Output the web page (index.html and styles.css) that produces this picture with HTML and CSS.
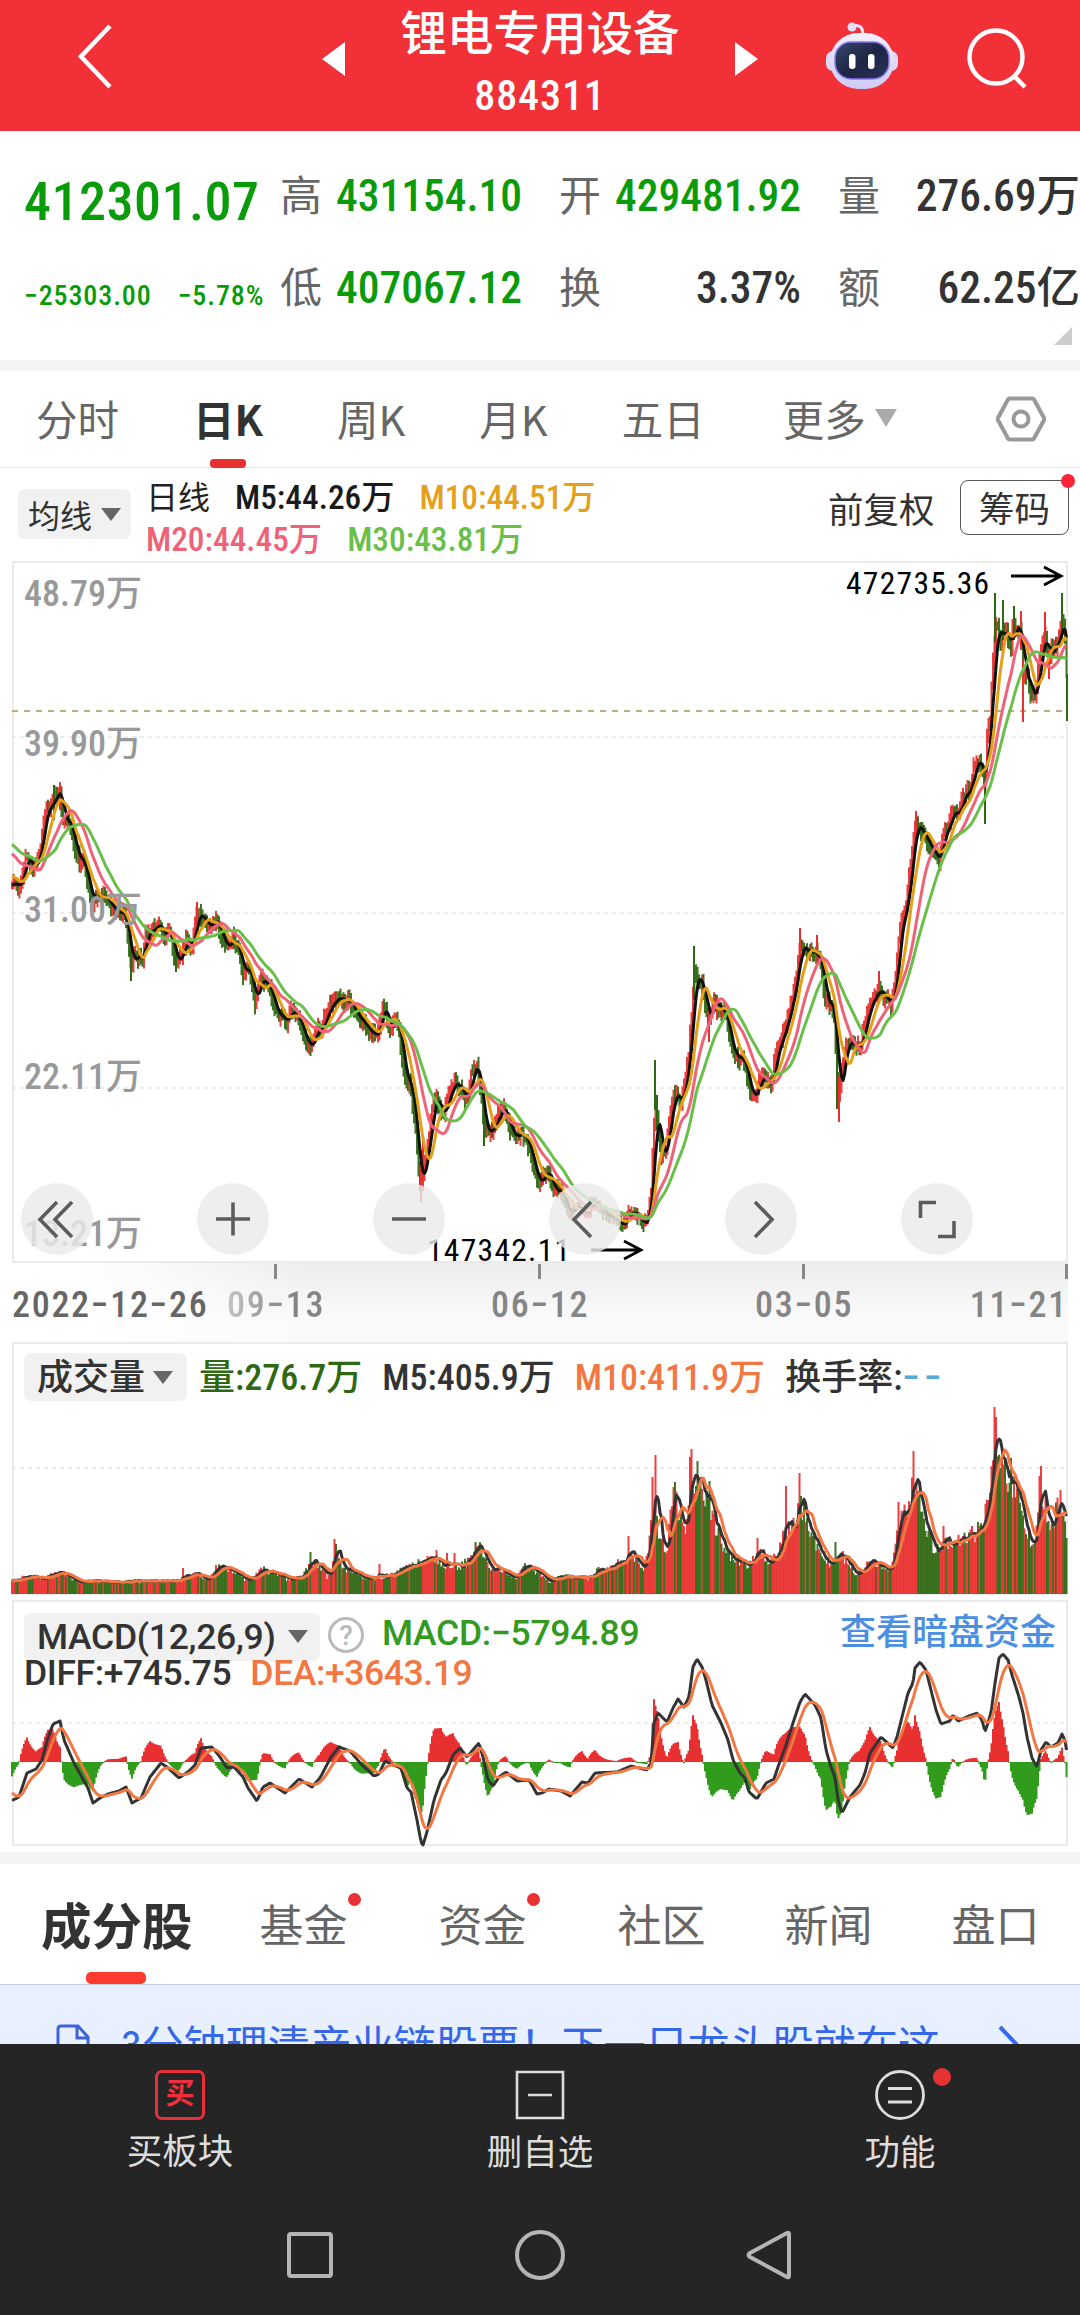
FILE: index.html
```html
<!DOCTYPE html>
<html lang="zh-CN">
<head>
  <meta charset="UTF-8">
  <meta name="viewport" content="width=device-width, initial-scale=1.0">
  <title>锂电专用设备 884311</title>
  <link rel="stylesheet" href="styles.css">
</head>
<body>
  <header class="header">
    <svg class="back" width="40" height="70" viewBox="0 0 40 70"><path d="M35 5 L6 35.500 L35 66" fill="none" stroke="#fff" stroke-width="4.500"/></svg>
    <svg class="prev" width="24" height="36" viewBox="0 0 24 36"><path d="M24 1v34L1 18z" fill="#fff"/></svg>
    <div class="title">
      <h1>锂电专用设备</h1>
      <span>884311</span>
    </div>
    <svg class="next" width="24" height="36" viewBox="0 0 24 36"><path d="M0 1v34l23-17z" fill="#fff"/></svg>
    <svg class="robot" width="74" height="70" viewBox="0 0 74 70">
      <defs>
        <linearGradient id="shell" x1="0" y1="0" x2="0" y2="1"><stop offset="0" stop-color="#f3f0ff"/><stop offset="1" stop-color="#cfcaf5"/></linearGradient>
        <linearGradient id="face" x1="0" y1="0" x2="1" y2="1"><stop offset="0" stop-color="#3a486c"/><stop offset=".5" stop-color="#1e2646"/><stop offset="1" stop-color="#28335a"/></linearGradient>
      </defs>
      <path d="M27 6q11-3 11 9" fill="none" stroke="#e9e4fb" stroke-width="3"/>
      <circle cx="27" cy="7" r="4.500" fill="#e4def8"/>
      <rect x="1" y="31" width="72" height="20" rx="7" fill="#ddd8f6"/>
      <rect x="5" y="13" width="64" height="56" rx="28" fill="url(#shell)"/>
      <rect x="10" y="22" width="54" height="37" rx="16" fill="url(#face)" stroke="#8c78e8" stroke-width="1.500"/>
      <rect x="24" y="34" width="6.500" height="15" rx="3" fill="#fff"/>
      <rect x="43" y="34" width="6.500" height="15" rx="3" fill="#fff"/>
    </svg>
    <svg class="search" width="62" height="62" viewBox="0 0 62 62"><g fill="none" stroke="#fff" stroke-width="4.500"><circle cx="30" cy="30" r="26.500"/><path d="M48 49l11 11"/></g></svg>
  </header>

  <section class="quote">
    <div class="quote-main">
      <strong>412301.07</strong>
      <p><span>−25303.00</span><span>−5.78%</span></p>
    </div>
    <dl class="quote-grid">
      <div><dt>高</dt><dd class="down">431154.10</dd></div>
      <div><dt>开</dt><dd class="down">429481.92</dd></div>
      <div><dt>量</dt><dd>276.69万</dd></div>
      <div><dt>低</dt><dd class="down">407067.12</dd></div>
      <div><dt>换</dt><dd>3.37%</dd></div>
      <div><dt>额</dt><dd>62.25亿</dd></div>
    </dl>
    <i class="corner"></i>
  </section>

  <nav class="period">
    <a>分时</a>
    <a class="active">日K</a>
    <a>周K</a>
    <a>月K</a>
    <a>五日</a>
    <a class="more">更多<i class="caret"></i></a>
    <svg class="setting" width="50" height="48" viewBox="0 0 50 48"><g fill="none" stroke="#999" stroke-width="4"><path d="M14 3.500h22a2 2 0 0 1 2 1L47.500 22a3 3 0 0 1 0 4L38 43.500a2 2 0 0 1-2 1H14a2 2 0 0 1-2-1L2.500 26a3 3 0 0 1 0-4L12 4.500a2 2 0 0 1 2-1z"/><circle cx="25" cy="24" r="7.500"/></g></svg>
  </nav>

  <section class="legend">
    <span class="chip chip-ma">均线<i class="caret"></i></span>
    <div class="legend-text">
      <p><span class="plain">日线</span><span class="ma5">M5:44.26万</span><span class="ma10">M10:44.51万</span></p>
      <p><span class="ma20">M20:44.45万</span><span class="ma30">M30:43.81万</span></p>
    </div>
    <span class="adjust">前复权</span>
    <span class="chips-btn">筹码<i class="dot"></i></span>
  </section>

  <section class="kline">
    <svg class="plot" id="kline" width="1080" height="702" viewBox="0 561 1080 702"></svg>
    <span class="scale s1">48.79万</span>
    <span class="scale s2">39.90万</span>
    <span class="scale s3">31.00万</span>
    <span class="scale s4">22.11万</span>
    <span class="scale s5">13.21万</span>
    <span class="mark high">472735.36</span>
    <span class="mark low">147342.11</span>
    <svg class="arrow arrow-high" width="54" height="22" viewBox="0 0 54 22"><path d="M1 11h50M34 2l17 9-17 9"/></svg>
    <svg class="arrow arrow-low" width="54" height="22" viewBox="0 0 54 22"><path d="M1 11h50M34 2l17 9-17 9"/></svg>
    <div class="tools">
      <svg viewBox="0 0 72 72"><path d="M36 19L19 36.500 36 54M51 19L34 36.500 51 54"/></svg>
      <svg viewBox="0 0 72 72"><path d="M36 19.500v33M19 36h34"/></svg>
      <svg viewBox="0 0 72 72"><path d="M19 36h34"/></svg>
      <svg viewBox="0 0 72 72"><path d="M42 19L25 36.500 42 54"/></svg>
      <svg viewBox="0 0 72 72"><path d="M30 19l17 17.500L30 54"/></svg>
      <svg viewBox="0 0 72 72"><path d="M19.500 35V19.500H35M53 38v15.500H37"/></svg>
    </div>
  </section>

  <section class="dates">
    <i class="tick t1"></i><i class="tick t2"></i><i class="tick t3"></i><i class="tick t4"></i>
    <span class="from">2022−12−26</span>
    <span class="date d1">09−13</span>
    <span class="date d2">06−12</span>
    <span class="date d3">03−05</span>
    <span class="date d4">11−21</span>
  </section>

  <section class="volume">
    <svg class="plot" id="volume" width="1080" height="254" viewBox="0 1342 1080 254"></svg>
    <div class="row">
      <span class="chip">成交量<i class="caret"></i></span>
      <span class="vol">量:276.7万</span>
      <span>M5:405.9万</span>
      <span class="orange">M10:411.9万</span>
      <span>换手率:<b>−−</b></span>
    </div>
  </section>

  <section class="macd">
    <svg class="plot" id="macd" width="1080" height="247" viewBox="0 1600 1080 247"></svg>
    <div class="row">
      <span class="chip">MACD(12,26,9)<i class="caret"></i></span>
      <span class="help">?</span>
      <span class="green">MACD:−5794.89</span>
      <span class="link">查看暗盘资金</span>
    </div>
    <div class="row row2"><span>DIFF:+745.75</span><span class="orange">DEA:+3643.19</span></div>
  </section>

  <nav class="tabs">
    <a class="active">成分股</a>
    <a class="new">基金<i class="dot"></i></a>
    <a class="new">资金<i class="dot"></i></a>
    <a>社区</a>
    <a>新闻</a>
    <a>盘口</a>
  </nav>

  <section class="notice">
    <svg width="34" height="44" viewBox="0 0 34 44"><path d="M2 42V5q0-3 3-3h17l10 11v29zM21 2v12h11M9 22h15" fill="none" stroke="#3c63d8" stroke-width="3"/></svg>
    <p>3分钟理清产业链股票！下一只龙头股就在这</p>
    <svg class="go" width="24" height="44" viewBox="0 0 24 44"><path d="M2 3l18 19L2 41" fill="none" stroke="#3568f0" stroke-width="4"/></svg>
  </section>

  <footer class="bottom">
    <div class="actions">
      <a><span class="buy">买</span>买板块</a>
      <a><svg width="50" height="50" viewBox="0 0 50 50"><path d="M2 2h46v46H2zM13 25h24" fill="none" stroke="#ddd" stroke-width="2.600"/></svg>删自选</a>
      <a><svg width="50" height="50" viewBox="0 0 50 50"><g fill="none" stroke="#ddd" stroke-width="2.800"><circle cx="25" cy="25" r="23.500"/><path d="M13 18.500h24M13 32h24"/></g></svg>功能<i class="dot"></i></a>
    </div>
    <div class="system">
      <svg viewBox="0 0 52 52"><rect x="5" y="5" width="42" height="42" rx="2"/></svg>
      <svg viewBox="0 0 52 52"><circle cx="26" cy="26" r="23"/></svg>
      <svg viewBox="0 0 52 52"><path d="M45 5v42q0 2-2 1L6 28q-3-2 0-4L43 4q2-1 2 1z"/></svg>
    </div>
  </footer>

  <script src="chart.js"></script>
</body>
</html>
```

FILE: styles.css
```css
* { box-sizing: border-box; margin: 0; padding: 0; }
body { width: 1080px; height: 2315px; overflow: hidden; background: #fff; color: #333; font-family: Roboto, "Noto Sans CJK SC", sans-serif; font-stretch: 75%; font-size: 36px; font-weight: 500; }
svg { display: block; flex: none; }
i, b { font-style: normal; font-weight: inherit; }
.caret { display: inline-block; flex: none; border: 10px solid transparent; border-top: 13px solid #666; border-bottom: 0; }
.dot { position: absolute; width: 14px; height: 14px; border-radius: 50%; background: #e63232; }

/* header */
.header { height: 131px; background: #f23037; color: #fff; display: flex; align-items: flex-start; }
.back { margin: 21px 0 0 75px; }
.prev { margin: 41px 0 0 206px; }
.title { width: 390px; text-align: center; }
.title h1 { font-size: 46.5px; font-weight: 500; line-height: 68px; height: 68px; }
.title span { display: block; font-size: 42px; line-height: 56px; letter-spacing: .9px; }
.next { margin: 41px 0 0; }
.robot { margin: 20px 0 0 66px; }
.search { margin: 27px 0 0 67px; }

/* quote */
.quote { position: relative; height: 229px; display: flex; padding-top: 19px; }
.quote-main { width: 281px; padding-left: 24px; color: #099b09; }
.quote-main strong { display: block; font-size: 54px; font-weight: 500; line-height: 104px; letter-spacing: .5px; }
.quote-main p { display: flex; gap: 26px; font-size: 28px; line-height: 84px; letter-spacing: .9px; white-space: nowrap; }
.quote-grid { display: grid; grid-template-columns: repeat(3, 242px); grid-auto-rows: 92px; column-gap: 37px; flex: none; }
.quote-grid div { display: flex; justify-content: space-between; align-items: baseline; line-height: 93px; height: 92px; white-space: nowrap; }
.quote-grid dt { color: #666; font-weight: 400; font-size: 42px; }
.quote-grid dd { font-size: 43.5px; font-weight: 500; }
.quote-grid .down { color: #099b09; }
.corner { position: absolute; right: 8px; bottom: 15px; border-left: 18px solid transparent; border-bottom: 18px solid #ccc; }

/* period tabs */
.period { height: 108px; border-top: 11px solid #f4f4f4; border-bottom: 1px solid #e5e5e5; display: flex; align-items: center; padding: 0 34px 2px 36px; gap: 74px; font-family: "Noto Sans CJK SC", sans-serif; font-size: 41.5px; font-weight: 400; color: #666; white-space: nowrap; }
.period a { position: relative; }
.period .active { color: #333; font-weight: 700; }
.period .active::after { content: ""; position: absolute; left: 50%; margin-left: -18px; bottom: -20px; width: 36px; height: 9px; border-radius: 4px; background: #e93030; }
.period .more { display: flex; align-items: center; gap: 9px; margin-left: 4px; }
.period .caret { border-width: 18px 11px 0; border-top-color: #aaa; }
.setting { margin: 2px 0 0 auto; }

/* legend */
.legend { height: 93px; display: flex; padding-left: 18px; white-space: nowrap; }
.chip { display: inline-flex; align-items: center; background: #f1f1f1; border-radius: 7px; }
.chip-ma { width: 113px; height: 50px; margin-top: 21px; padding-left: 10px; gap: 9px; font-size: 32px; font-weight: 400; }
.legend-text { margin: 9px 0 0 15px; width: 682px; font-size: 33.3px; }
.legend-text p { display: flex; gap: 25px; height: 42px; line-height: 42px; }
.legend-text .plain { font-size: 32px; font-weight: 400; color: #222; }
.ma5 { color: #1a1a1a; }
.ma10 { color: #e5a01b; }
.ma20 { color: #ee6377; }
.ma30 { color: #6abf4b; }
.adjust { font-size: 35.5px; font-weight: 400; line-height: 87px; width: 132px; }
.chips-btn { position: relative; width: 109px; height: 55px; margin-top: 12px; border: 1.5px solid #555; border-radius: 8px; font-size: 35.5px; font-weight: 400; line-height: 58px; text-align: center; }
.chips-btn .dot { top: -7px; right: -7px; background: #ff2438; }

/* k line */
.kline { position: relative; height: 702px; }
.plot { position: absolute; left: 0; top: 0; }
.scale { position: absolute; left: 24px; line-height: 50px; color: #999; }
.s1 { top: 8px; }
.s2 { top: 158px; }
.s3 { top: 324px; }
.s4 { top: 491px; }
.s5 { top: 648px; }
.mark { position: absolute; font-size: 31.5px; font-weight: 400; line-height: 40px; color: #000; letter-spacing: 1.3px; }
.high { left: 846px; top: 3px; }
.low { left: 427px; top: 670px; }
.arrow { position: absolute; fill: none; stroke: #000; stroke-width: 2.8; }
.arrow-high { left: 1010px; top: 4px; }
.arrow-low { left: 590px; top: 678px; }
.tools { position: absolute; left: 21px; top: 622px; display: flex; gap: 104px; }
.tools svg { width: 72px; height: 72px; border-radius: 50%; background: rgba(234, 234, 234, .82); fill: none; stroke: #5c5c5c; stroke-width: 3.6; }

/* dates */
.dates { position: relative; height: 79px; margin: 0 12px; background: linear-gradient(90deg, #fff 60px, rgba(255, 255, 255, 0) 300px), linear-gradient(#ededed, #fafafa 70%); color: #858585; letter-spacing: 1.7px; }
.tick { position: absolute; top: 1px; width: 3px; height: 15px; background: #888; }
.t1 { left: 262px; }
.t2 { left: 526px; }
.t3 { left: 790px; }
.t4 { left: 1053px; }
.date, .from { position: absolute; top: 17px; line-height: 50px; white-space: nowrap; }
.from { left: 0; color: #666; }
.d1 { left: 215px; background: linear-gradient(90deg, #c5c5c5, #858585 60%); -webkit-background-clip: text; background-clip: text; color: transparent; }
.d2 { left: 479px; }
.d3 { left: 743px; }
.d4 { right: 0; }

/* sub charts */
.volume { position: relative; height: 258px; }
.macd { position: relative; height: 252px; }
.row { position: relative; display: flex; align-items: center; white-space: nowrap; }
.row .chip { height: 48px; padding: 0 14px 0 13px; gap: 8px; line-height: 44px; }
.volume .row { padding: 11px 0 0 24px; gap: 20px; line-height: 44px; }
.volume .row span { padding-top: 1px; }
.volume .row .vol { color: #2f6812; margin-left: -8px; }
.volume b { color: #56a8d8; letter-spacing: 4px; }
.orange { color: #f27743; }
.macd { font-stretch: 100%; font-size: 35.5px; }
.macd .row { padding: 10px 24px 0 24px; height: 60px; }
.macd .chip { width: 296px; margin-top: 3px; justify-content: space-between; padding-right: 12px; letter-spacing: -.3px; }
.help { width: 36px; height: 36px; margin: 0 18px 0 8px; border: 3px solid #bbb; border-radius: 50%; color: #bbb; font-size: 28px; line-height: 31px; text-align: center; }
.macd .green { color: #349a1f; padding-bottom: 4px; letter-spacing: -.3px; }
.macd .link { margin-left: auto; color: #4b8fe2; padding-bottom: 13px; font-size: 36px; }
.macd .row2 { padding: 0 24px; gap: 19px; height: 26px; line-height: 24px; letter-spacing: -.4px; }

/* bottom tabs */
.tabs { height: 133px; border-top: 12px solid #f4f4f4; border-bottom: 1px solid #c5cad8; display: flex; align-items: center; padding: 0 0 2px 41px; gap: 79px; font-size: 44px; font-weight: 400; color: #666; white-space: nowrap; }
.tabs a { position: relative; }
.tabs .new { margin-right: 12px; }
.tabs .active { color: #333; font-size: 50.5px; font-weight: 700; margin-right: -12px; }
.tabs .active::after { content: ""; position: absolute; left: 45px; bottom: -24px; width: 60px; height: 12px; border-radius: 5px; background: #ff3b30; }
.tabs .dot { width: 13px; height: 13px; right: -13px; top: 2px; }

.notice { height: 59px; overflow: hidden; background: #e8effe; display: flex; align-items: flex-start; padding-left: 56px; font-size: 42px; font-weight: 400; color: #3568e8; white-space: nowrap; }
.notice svg { margin-top: 39px; }
.notice p { margin-left: 31px; line-height: 60px; padding-top: 32px; }
.notice .go { margin-left: auto; margin-right: 58px; }

/* bottom bar */
.bottom { height: 271px; background: #252525; color: #ddd; }
.actions { display: grid; grid-template-columns: repeat(3, 1fr); height: 173px; font-size: 35.5px; font-weight: 400; }
.actions a { position: relative; display: flex; flex-direction: column; align-items: center; padding-top: 26px; line-height: 65px; }
.actions .buy { width: 50px; height: 50px; border: 3px solid #e9303a; border-radius: 7px; color: #f0303c; font-size: 29px; font-weight: 700; line-height: 43px; text-align: center; }
.actions svg { margin-bottom: 1px; }
.actions .dot { width: 18px; height: 18px; left: 213px; top: 24px; }
.system { display: flex; justify-content: center; gap: 178px; padding-top: 12px; }
.system svg { width: 52px; height: 52px; fill: none; stroke: #b5b5b5; stroke-width: 4; }
```

FILE: chart.js
```js
const RED = '#e93030', GREEN = '#2f6812', DARK = '#333';
const X0 = 12, STEP = 1.5, COUNT = 704;

// x,y anchors of the daily price path
const price = [13,883,20,888,26,857,33,867,40,853,43,823,46,810,52,803,54,795,60,793,63,823,69,823,73,843,79,860,84,863,89,893,93,900,98,895,105,897,112,910,119,913,125,913,128,940,131,967,134,950,138,960,143,957,145,933,152,930,159,925,165,940,170,930,176,965,183,950,187,937,191,950,197,913,201,915,207,925,216,920,220,932,226,950,232,938,238,950,243,973,248,963,251,980,255,1003,260,977,269,987,275,1010,281,1018,286,1022,291,1010,297,1015,303,1033,308,1045,313,1043,317,1027,321,1033,324,1017,332,1003,339,997,344,1005,348,997,355,1013,362,1023,372,1035,378,1035,382,1007,385,1008,389,1033,395,1020,399,1030,401,1053,406,1083,410,1080,413,1107,416,1133,418,1167,421,1187,424,1163,429,1137,432,1107,436,1097,441,1110,444,1113,448,1097,455,1083,460,1087,465,1100,468,1100,471,1073,477,1065,480,1087,484,1130,489,1133,493,1130,498,1113,504,1110,510,1130,515,1138,520,1133,527,1140,532,1160,536,1180,540,1182,547,1170,554,1190,561,1190,568,1213,578,1207,586,1215,593,1203,604,1213,614,1220,623,1225,630,1212,638,1215,643,1225,647,1220,651,1190,653,1147,655,1100,658,1127,661,1157,666,1150,668,1127,674,1093,677,1093,681,1107,685,1080,689,1050,692,1007,694,973,698,983,702,983,705,1007,709,1023,714,1003,719,1007,726,1017,729,1037,733,1052,738,1057,743,1060,747,1077,751,1097,756,1095,760,1077,766,1080,771,1087,774,1063,781,1040,786,1023,791,1003,797,973,800,943,805,950,815,953,821,963,824,997,831,1007,834,1017,837,1080,839,1100,842,1067,846,1043,852,1043,860,1047,865,1023,871,1003,879,990,884,1000,891,1003,895,987,898,943,901,921,906,907,910,870,913,843,916,823,920,830,925,840,930,847,935,857,939,860,943,833,948,830,952,807,957,817,962,800,967,790,971,790,973,767,979,760,983,777,985,787,987,737,990,717,993,660,996,623,1000,640,1004,627,1008,637,1011,650,1013,623,1018,633,1021,630,1023,677,1027,673,1030,693,1036,693,1039,660,1043,640,1045,633,1048,657,1053,647,1057,647,1061,623,1063,623,1066,647,1067,697];

// x,height anchors of the volume
const volume = [12,14,28,18,41,16,59,22,67,18,79,13,138,13,172,13,183,16,196,20,207,16,217,28,231,26,244,15,255,18,260,26,272,22,286,16,303,18,310,30,316,34,327,18,334,34,339,38,344,26,362,17,377,16,389,19,406,26,425,34,437,36,446,26,461,29,470,36,479,48,486,38,492,25,499,28,517,16,522,30,530,26,540,22,549,13,561,18,588,16,597,24,609,27,623,35,631,42,643,27,648,38,652,80,656,105,659,60,667,44,672,90,677,92,686,58,691,110,696,126,704,105,710,80,717,68,723,50,733,36,747,30,760,42,769,32,778,42,785,70,794,68,801,92,812,58,826,36,834,28,842,40,855,20,871,32,891,26,896,60,903,84,910,96,914,118,919,100,926,66,934,46,941,48,953,54,974,62,982,68,988,100,993,140,998,150,1005,124,1012,116,1019,96,1029,60,1035,48,1040,100,1045,95,1051,64,1058,90,1063,80,1067,62];
const volumeSpikes = { 183: 26, 310: 42, 334: 55, 336: 50, 380: 30, 436: 44, 447: 41, 455: 41, 476: 52, 629: 58, 653: 117, 655: 139, 673: 107, 675: 112, 690: 137, 692: 145, 697: 133, 710: 113, 758: 56, 786: 108, 800: 121, 836: 52, 899: 92, 914: 143, 944: 68, 994: 187, 996: 177, 1011: 136, 1041: 128, 1039: 118, 1060: 104 };

// x,y anchors of DIFF
const diffLine = [13,1800,19,1797,27,1773,36,1769,42,1760,48,1738,53,1724,60,1721,64,1740,74,1763,88,1788,93,1803,100,1798,108,1794,119,1791,126,1787,132,1803,141,1798,150,1777,161,1763,167,1767,179,1778,188,1772,195,1765,201,1748,212,1747,220,1757,227,1768,234,1767,243,1777,248,1788,257,1801,263,1787,270,1783,285,1793,299,1779,312,1787,320,1778,331,1757,339,1747,350,1751,362,1765,374,1776,379,1774,385,1761,393,1765,401,1768,407,1788,411,1792,417,1820,421,1842,423,1845,427,1832,434,1800,441,1780,446,1773,453,1755,460,1748,467,1757,473,1750,479,1743,483,1757,488,1780,493,1786,499,1777,506,1772,517,1781,529,1780,537,1794,542,1793,549,1789,561,1791,570,1796,582,1782,588,1783,595,1773,617,1772,631,1766,647,1770,651,1763,654,1723,658,1713,667,1722,673,1708,678,1699,684,1707,689,1697,693,1667,697,1659,702,1667,706,1680,712,1705,721,1723,728,1740,733,1760,740,1773,745,1778,749,1792,757,1799,766,1783,774,1779,778,1767,786,1745,793,1723,800,1702,805,1694,815,1705,821,1718,826,1750,831,1767,835,1777,838,1800,842,1813,850,1797,860,1785,865,1773,870,1753,881,1737,893,1748,897,1737,903,1713,908,1693,913,1683,915,1668,920,1662,926,1670,931,1690,936,1710,941,1724,950,1721,953,1715,958,1721,969,1716,977,1713,982,1720,985,1732,991,1713,995,1683,999,1658,1003,1654,1008,1660,1012,1675,1019,1697,1023,1713,1027,1737,1032,1758,1037,1767,1041,1750,1046,1742,1051,1747,1058,1743,1062,1734,1066,1743,1067,1757];

// long wicks: x, high, low
const wicks = [[54,785,820],[60,785,810],[131,950,981],[176,940,972],[197,902,930],[421,1150,1202],[423,1140,1182],[484,1110,1146],[655,1060,1110],[657,1095,1130],[694,946,1000],[709,1010,1042],[717,998,1020],[800,928,965],[817,935,955],[837,1052,1109],[839,1075,1122],[879,971,1000],[916,811,840],[985,770,824],[995,593,642],[1003,600,640],[1014,606,640],[1021,611,650],[1023,660,722],[1045,612,650],[1049,650,679],[1062,593,640],[1067,674,721]];
const greenWicks = [54, 131, 176, 484, 655, 657, 694, 837, 985, 995, 1003, 1014, 1062, 1067];

let seed = 884311;
function rand() {
  seed = (seed * 16807) % 2147483647;
  return seed / 2147483647;
}

function sample(points) {
  const out = [];
  let k = 0;
  for (let i = 0; i < COUNT; i++) {
    const x = X0 + i * STEP;
    while (k < points.length - 4 && points[k + 2] < x) k += 2;
    const t = Math.min(1, Math.max(0, (x - points[k]) / (points[k + 2] - points[k])));
    out.push(points[k + 1] + (points[k + 3] - points[k + 1]) * t);
  }
  return out;
}

function average(values, n, before) {
  return values.map((_, i) => {
    let sum = 0;
    for (let j = i - n + 1; j <= i; j++) sum += j < 0 ? before : values[j];
    return sum / n;
  });
}

function line(values, color, width = 3) {
  const d = values.map((v, i) => (i ? 'L' : 'M') + (X0 + i * STEP).toFixed(1) + ' ' + v.toFixed(1)).join('');
  return `<path d="${d}" fill="none" stroke="${color}" stroke-width="${width}" stroke-linejoin="round"/>`;
}

function bar(x, top, bottom, color, opacity = .92) {
  return `<rect x="${x.toFixed(1)}" y="${top.toFixed(1)}" width="2" height="${Math.max(1, bottom - top).toFixed(1)}" fill="${color}" opacity="${opacity}"/>`;
}

function grid(y, color = '#e6e6e6', dash = '4 4', width = 1.5) {
  return `<path d="M12 ${y}H1068" stroke="${color}" stroke-width="${width}" stroke-dasharray="${dash}"/>`;
}

function frame(top, bottom) {
  return `<rect x="13" y="${top}" width="1054" height="${bottom - top}" fill="none" stroke="#ebebeb" stroke-width="2"/>`;
}

const base = sample(price);
const close = base.map(v => v + (rand() - .5) * 6);
const up = close.map((v, i) => i ? v < close[i - 1] : true);

function drawKline() {
  let html = frame(562, 1262) + grid(737) + grid(913) + grid(1088) + grid(711, '#c0a980', '6 6', 2);
  for (let i = 0; i < COUNT; i++) {
    const prev = close[Math.max(0, i - 1)];
    const spread = base[i] > 1195 ? 1 : 3;
    const top = Math.min(close[i], prev) - spread - rand() * 7;
    const bottom = Math.max(close[i], prev) + spread + rand() * 7;
    html += bar(X0 + i * STEP - 1, top, Math.min(bottom, 1232), up[i] ? RED : GREEN);
  }
  wicks.forEach(([x, top, bottom]) => {
    html += bar(x - 1, top, bottom, greenWicks.includes(x) ? GREEN : RED, 1);
  });
  html += line(average(close, 5, 885), '#111');
  html += line(average(close, 10, 875), '#e5a01b');
  html += line(average(close, 20, 852), '#ee6377');
  html += line(average(close, 30, 843), '#6abf4b');
  document.getElementById('kline').innerHTML = html;
}

function drawVolume() {
  const heights = sample(volume).map(v => v * (.82 + rand() * .3));
  for (const x in volumeSpikes) heights[Math.round((x - X0) / STEP)] = volumeSpikes[x];
  let html = frame(1343, 1594) + grid(1468);
  heights.forEach((h, i) => {
    html += bar(X0 + i * STEP - 1, 1594 - h, 1594, up[i] ? RED : GREEN);
  });
  const tops = heights.map(h => 1594 - h);
  html += line(average(tops, 5, 1581), DARK) + line(average(tops, 10, 1581), '#f27743');
  document.getElementById('volume').innerHTML = html;
}

function drawMacd() {
  const diff = sample(diffLine);
  const dea = [];
  let e = 1791;
  diff.forEach(v => dea.push(e += (v - e) * .2));
  let html = frame(1601, 1845) + grid(1723);
  diff.forEach((v, i) => {
    const h = (v - dea[i]) * 2;
    html += bar(X0 + i * STEP - 1, h < 0 ? 1762 + h : 1762, h < 0 ? 1762 : 1762 + h, h < 0 ? RED : '#319b1c', 1);
  });
  html += line(diff, DARK) + line(dea, '#f27743');
  document.getElementById('macd').innerHTML = html;
}

drawKline();
drawVolume();
drawMacd();
```
